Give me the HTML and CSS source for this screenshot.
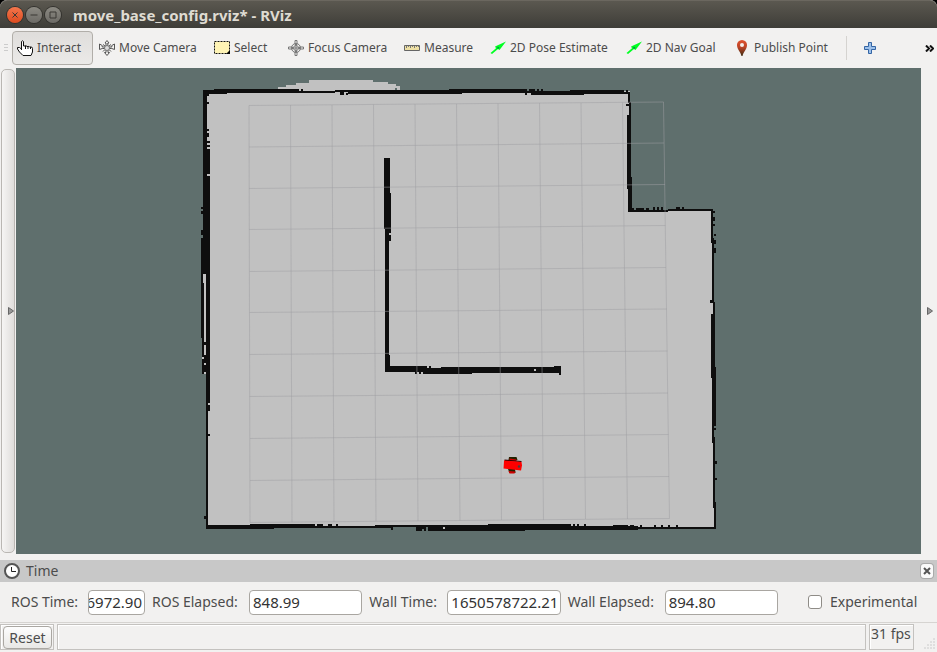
FILE: index.html
```html
<!DOCTYPE html>
<html lang="en">
<head>
<meta charset="utf-8">
<title>move_base_config.rviz* - RViz</title>
<link rel="stylesheet" href="styles.css">
</head>
<body>
<div class="window">
  <header class="titlebar">
    <button class="wm wm-close" aria-label="Close"><svg viewBox="0 0 16 16"><path d="M5.5 5.5l5 5M10.5 5.5l-5 5"/></svg></button>
    <button class="wm" aria-label="Minimize"><svg viewBox="0 0 16 16"><path d="M4.5 8h7"/></svg></button>
    <button class="wm" aria-label="Maximize"><svg viewBox="0 0 16 16"><path d="M5 5h6v6H5z"/></svg></button>
    <h1>move_base_config.rviz* - RViz</h1>
  </header>

  <nav class="toolbar">
    <span class="grip"></span>
    <button class="tool active">
      <svg viewBox="0 0 16 16"><path d="M4.500 10V1.500Q5.500 0 6.500 1.500V6h1.500q1-1 2 .500h1q1-.5 1.500.500h1.500q1.500 0 1.500 1.500V12l-1.500 3.500H6L2.500 12 .5 9V7.500h2L4.500 9" fill="#fff" stroke="#111"/><path d="M8.500 6v3M11 6.500V9M13.500 7v2" stroke="#111" fill="none"/></svg>
      Interact</button>
    <button class="tool">
      <svg viewBox="0 0 16 16"><g fill="#f5f4f2" stroke="#555"><path d="M8 .5l2 2.500H8.800v4h4V5.500L15.500 4v5.500L12.800 8.500H9v4h1.500L8 15.500 5.500 12.500H7v-4H3.200L.5 9.500V4l2.700 1.500V7H7V3H6z"/><path d="M4 4.500l2 1.500M12 4.500L10 6M4 11.500L6 9.500M12 11.500L10 9.500"/></g><circle cx="8" cy="8" r="2.500" fill="#ddd" stroke="#777"/></svg>
      Move Camera</button>
    <button class="tool">
      <svg viewBox="0 0 16 16"><path d="M.5 1.500h15v12H.5z" fill="#fff4b5" stroke="#111" stroke-dasharray="2 1"/><path d="M16 10v4h-4z"/></svg>
      Select</button>
    <button class="tool">
      <svg viewBox="0 0 16 16"><g fill="none" stroke="#777"><circle cx="8" cy="8" r="4.500"/><circle cx="8" cy="8" r="2.500"/><path d="M7 .5h2v4H7zM7 11.500h2v4H7zM.5 7h4v2h-4zM11.500 7h4v2h-4zM8 5v6M5 8h6"/></g></svg>
      Focus Camera</button>
    <button class="tool">
      <svg viewBox="0 0 16 16"><path d="M.5 5.500h15v5H.5z" fill="#eee0a4" stroke="#666"/><path d="M2.500 6v2M4.500 6v1M6.500 6v2M8.500 6v1M10.500 6v2M12.500 6v1M14.500 6v1" stroke="#777"/></svg>
      Measure</button>
    <button class="tool">
      <svg viewBox="0 0 16 16"><path d="M.5 13L6 8.200 5 6.500 16 1.500 9.500 10 8 9 2 14z" fill="#0f2"/><path d="M7.500 6.500l2 1.500-2 1z" fill="#075"/></svg>
      2D Pose Estimate</button>
    <button class="tool">
      <svg viewBox="0 0 16 16"><path d="M.5 13L6 8.200 5 6.500 16 1.500 9.500 10 8 9 2 14z" fill="#0f2"/><path d="M7.500 6.500l2 1.500-2 1z" fill="#075"/></svg>
      2D Nav Goal</button>
    <button class="tool pin">
      <svg viewBox="0 0 12 16"><defs><linearGradient id="pin" x2="0" y2="1"><stop offset="0" stop-color="#e0512e"/><stop offset=".45" stop-color="#bc4427"/><stop offset="1" stop-color="#3c2a10"/></linearGradient></defs><path d="M6 0a5 5 0 0 1 5 5.300C11 9 7.500 12 6.500 16h-1C4.500 12 1 9 1 5.300A5 5 0 0 1 6 0z" fill="url(#pin)"/><circle cx="6" cy="5" r="2" fill="#f4eeea"/></svg>
      Publish Point</button>
    <button class="add" aria-label="Add tool"><svg viewBox="0 0 12 12"><path d="M4.500.5h3v4h4v3h-4v4h-3v-4h-4v-3h4z" fill="#9cc0ea" stroke="#3465a4"/></svg></button>
    <button class="more" aria-label="More tools"><svg viewBox="0 0 9 7"><path d="M1 .5l3 3-3 3M5 .5l3 3-3 3"/></svg></button>
  </nav>

  <main class="workspace">
    <button class="handle" aria-label="Show left panels"><svg viewBox="0 0 6 8"><path d="M.5.5v7l5-3.500z"/></svg></button>
    <svg class="map" viewBox="16 68 905 486" role="img" aria-label="Map view">
      <g shape-rendering="crispEdges">
        <path fill="#c1c1c1" d="M204 91H278V87h8V85h10V83h13V80h64v2h15v2h8v2h4v5H630V211H713V302h1V527H207V374H203V274h3z"/>
        <path fill="#0e0e0e" d="M203 90h24v4h-24zM214 89h85v4h-85zM301 89h2v2h-2zM299 91h36v2h-36zM335 90h127v4H348v-2h-13zM340 92h4v3h-4zM346 93h2v2h-2zM449 89h78v4h-78zM529 89h6v2h-6zM537 89h2v2h-2zM541 89h2v2h-2zM527 91h16v2h-16zM525 93h2v2h-2zM531 91h53v4h-53zM570 90h54v4h-54zM624 92h6v2h-6zM626 90h2v2h-2z"/>
        <path fill="#0e0e0e" d="M628 92h2v11h-2zM629 102h2v13h-2zM626 104h3v2h-3zM627 115h4v74h-4zM628 177h4v35h-4zM628 210h40v2h-40zM632 208h2v2h-2zM636 208h8v2h-8zM646 208h3v2h-3zM653 207h2v3h-2zM657 207h2v3h-2zM661 207h2v3h-2zM668 209h45v2h-45zM676 207h4v2h-4zM682 207h2v2h-2z"/>
        <path fill="#0e0e0e" d="M711 209h2v34h-2zM713 211h2v2h-2zM713 217h2v4h-2zM713 224h2v2h-2zM714 234h2v2h-2zM713 240h3v4h-3zM714 248h2v5h-2zM712 238h2v64h-2zM710 300h3v3h-3zM713 302h2v12h-2zM711 314h4v64h-4zM712 367h4v59h-4zM714 428h2v2h-2zM712 426h2v17h-2zM713 437h2v71h-2zM715 461h2v3h-2zM715 478h2v2h-2zM714 502h2v27h-2z"/>
        <path fill="#0e0e0e" d="M206 525h68v4h-68zM250 524h65v4h-65zM315 526h76v2h-76zM317 524h6v2h-6zM328 524h4v2h-4zM336 524h2v2h-2zM375 525h150v2H375zM391 527h2v3h-2zM416 527h6v4h-6zM422 527h2v2h-2zM424 527h2v4h-2zM428 526h97v5h-97zM488 524h83v6h-83zM571 526h67v4h-67zM573 524h2v2h-2zM577 524h2v2h-2zM584 524h2v2h-2zM613 525h15v2h-15zM630 525h4v2h-4zM628 527h88v2h-88zM640 525h2v2h-2zM654 525h2v2h-2zM661 525h2v2h-2zM668 525h2v2h-2zM676 525h2v2h-2z"/>
        <path fill="#0e0e0e" d="M203 90h4v60h-4zM207 94h2v2h-2zM207 102h2v2h-2zM207 129h2v2h-2zM207 133h2v4h-2zM207 141h3v2h-3zM207 145h3v2h-3zM203 149h7v91h-7zM201 207h2v2h-2zM201 211h2v3h-2zM201 230h2v6h-2zM201 238h9v36h-9zM201 274h2v64h-2zM203 283h1v91h-1zM202 338h4v36h-4zM206 274h4v129h-4zM206 403h2v125h-2zM208 405h2v6h-2zM208 434h2v2h-2zM204 516h2v3h-2z"/>
        <path fill="#0e0e0e" d="M384 158h6v71h-6zM389 193h2v40h-2zM385 229h4v143h-4zM389 235h2v6h-2zM389 355h1v12h-1zM385 366h42v6h-42zM429 366h2v2h-2zM423 368h49v6h-49zM415 372h2v2h-2zM419 372h2v2h-2zM441 367h113v6H441zM554 366h7v7h-7zM559 373h2v2h-2z"/>
        <path fill="#c1c1c1" d="M207 174h3v2h-3zM203 274h3v9h-3zM204 283h2v59h-2zM204 345h2v10h-2zM202 357h2v2h-2zM204 363h2v2h-2zM204 372h2v2h-2zM711 308h2v5h-2zM627 108h2v7h-2zM443 527h2v2h-2zM534 369h2v2h-2z"/>
        <path fill="#5f6f6d" d="M203 374h3v142h-3zM395 88h2v2h-2zM201 235h2v2h-2z"/>
      </g>
      <path class="grid" d="M249 105.500L250 522.500M290.500 105L292 522M332 105L334 522M373.500 104.500L376 521M415 104L418 521M456.500 104L460 520.500M498 103.500L501.500 520M539.500 103L543.500 520M581 103L585.500 519M622.500 102.500L627.500 519M663.500 102L669.500 518.500M249 105.500L663.500 102M249 147L664 143M249 188.500L665 184.500M249 229.500L665.500 225.500M249.500 271.500L666 267.500M249.500 312.500L667 309M249.500 354.500L667.500 351M249.500 396.500L668 393M250 438.500L668.500 434.500M250 480.500L669 476.500M250 522.500L669.500 518.500"/>
      <g class="robot">
        <path d="M509 457h7.500l1 3h-9zM508 469h7l.5 4h-6z" fill="#220"/>
        <path d="M509.500 458.500l7 1v2h-7zM508.500 471l7 .500-1 2h-5z" fill="#c00"/>
        <path d="M504.500 459.500l17 1.500v1l-17-1z" fill="#300"/>
        <path d="M504 460.500l17.500 1.500.5 3.500-1 5-17.500-2z" fill="#f00"/>
        <circle cx="519" cy="466.500" r="1.200" fill="#444"/>
      </g>
    </svg>
    <button class="handle right" aria-label="Show right panels"><svg viewBox="0 0 6 8"><path d="M.5.5v7l5-3.500z"/></svg></button>
  </main>

  <section class="time">
    <header class="panel-title">
      <svg class="clock" viewBox="0 0 16 16"><circle cx="8" cy="8" r="7" fill="#fff" stroke="#555" stroke-width="2"/><path d="M7.500 4v4.500H12" fill="none" stroke="#222"/></svg>
      <h2>Time</h2>
      <button class="panel-close" aria-label="Close panel"><svg viewBox="0 0 8 8"><path d="M1 1l6 6M7 1L1 7"/></svg></button>
    </header>
    <form class="fields">
      <label for="ros-time">ROS Time:</label>
      <input class="clipped" id="ros-time" type="text" value="6972.90">
      <label for="ros-elapsed">ROS Elapsed:</label>
      <input id="ros-elapsed" type="text" value="848.99">
      <label for="wall-time">Wall Time:</label>
      <input id="wall-time" type="text" value="1650578722.21">
      <label for="wall-elapsed">Wall Elapsed:</label>
      <input id="wall-elapsed" type="text" value="894.80">
      <label class="check"><input type="checkbox">Experimental</label>
    </form>
  </section>

  <footer class="status">
    <div class="cell"><button class="reset">Reset</button></div>
    <div class="cell message"></div>
    <div class="cell fps">31 fps</div>
    <svg class="size-grip" viewBox="0 0 12 12"><path d="M9 1h2M6 4h2M9 4h2M3 7h2M6 7h2M9 7h2M0 10h2M3 10h2M6 10h2M9 10h2"/></svg>
  </footer>
</div>
</body>
</html>
```
FILE: styles.css
```css
* { box-sizing: border-box; }

body {
  margin: 0;
  background: #000;
  color: #4c4c4c;
  font: 14px/20px "Noto Sans", "Open Sans", sans-serif;
}

button, input { font: inherit; color: inherit; margin: 0; }
button { padding: 0; border: 0; background: none; }
h1, h2 { margin: 0; font-size: inherit; }
svg { display: block; flex: none; }

.window {
  display: flex;
  flex-direction: column;
  min-height: 100vh;
  background: #f2f1f0;
  border-radius: 7px 7px 0 0;
}

.titlebar {
  display: flex;
  align-items: center;
  gap: 3px;
  height: 28px;
  padding-left: 7px;
  background: linear-gradient(#5b5850, #3e3d38);
  border-top: 1px solid #6b675f;
  border-radius: 7px 7px 0 0;
}
.titlebar h1 {
  margin-left: 9px;
  color: #dfdbd2;
  font-size: 15px;
  font-weight: 700;
}
.wm {
  width: 16px;
  height: 16px;
  border-radius: 50%;
  background: linear-gradient(#8b8982, #6d6b66);
  box-shadow: 0 0 0 1px #33322e;
}
.wm-close { background: linear-gradient(#f4764c, #dd4b1f); }
.wm path { fill: none; stroke: #3a3935; }

.toolbar {
  display: grid;
  grid-template-columns: 12px 81px 115px 74px 116px 86px 136px 110px 116px 1fr 15px;
  align-items: center;
  height: 40px;
  font-size: 12px;
}
.grip {
  width: 4px;
  height: 8px;
  margin-left: 4px;
  background: repeating-linear-gradient(#ccc 0 1px, #f2f1f0 1px 3px);
}
.tool {
  display: flex;
  align-items: center;
  gap: 4px;
  height: 34px;
  padding-left: 6px;
  border: 0;
  white-space: nowrap;
}
.tool svg { width: 16px; height: 16px; }
.tool.active {
  padding-left: 4px;
  border: 1px solid #b1aea9;
  border-radius: 4px;
  background: linear-gradient(#dfdddb, #ebeae8);
}
.tool.pin { gap: 6px; }
.tool.pin svg { width: 12px; }
.add {
  display: flex;
  align-items: center;
  height: 24px;
  padding-left: 17px;
  border-left: 1px solid #d5d3d0;
}
.add svg { width: 12px; height: 12px; }
.more { justify-self: center; }
.more svg { width: 9px; height: 7px; }
.more path { fill: none; stroke: #111; stroke-width: 2; }

.workspace {
  flex: 1;
  display: grid;
  grid-template-columns: 16px 1fr 16px;
}
.handle {
  display: flex;
  align-items: center;
  justify-content: flex-end;
  margin: 1px;
  border: 1px solid #bab7b3;
  border-radius: 5px;
  background: linear-gradient(90deg, #f6f5f4, #dfdddb);
}
.handle.right {
  padding-right: 2px;
  border-color: transparent;
  background: none;
}
.handle svg { width: 6px; height: 8px; }
.handle path { fill: #999; stroke: #666; }
.map { width: 100%; height: 100%; background: #5f6f6d; }
.grid { fill: none; stroke: #a0a0a4; stroke-opacity: .5; }

.time { margin-top: 6px; }
.panel-title {
  display: flex;
  align-items: center;
  gap: 6px;
  height: 22px;
  padding: 0 4px;
  background: #c8c8c8;
}
.panel-title h2 { flex: 1; font-weight: 400; }
.clock { width: 16px; height: 16px; }
.panel-close {
  display: grid;
  place-items: center;
  width: 12px;
  height: 14px;
  border-radius: 3px;
  background: #fafafa;
  box-shadow: 0 0 0 1px #aaa;
}
.panel-close svg { width: 8px; height: 8px; }
.panel-close path { stroke: #555; stroke-width: 2; }

.fields {
  display: grid;
  grid-template-columns: 70px 57px 90px 1fr 71px 1fr 90px 1fr 136px;
  gap: 7px;
  align-items: center;
  height: 40px;
  margin: 0;
  padding: 0 16px 0 11px;
  white-space: nowrap;
}
.fields input[type="text"] {
  width: 100%;
  min-width: 0;
  height: 25px;
  padding: 0 2px 0 3px;
  border: 1px solid #a9a6a1;
  border-radius: 4px;
  background: #fff;
  color: #333;
  font-size: 15px;
}
/* Right-to-left flow keeps the last digits in view when the value is too long. */
.fields input.clipped { padding: 0 2px 0 0; direction: rtl; }
.check {
  display: flex;
  align-items: center;
  gap: 8px;
  padding-left: 23px;
}
.check input {
  appearance: none;
  width: 14px;
  height: 14px;
  border: 1px solid #8f8c87;
  border-radius: 3px;
  background: #fff;
}

.status {
  display: flex;
  gap: 3px;
  height: 30px;
  padding: 1px 1px 2px 0;
  border-top: 1px solid #d6d4d1;
}
.cell { border: 1px solid #c4c2bf; box-shadow: inset 1px 1px #fff; }
.cell:first-child { padding: 1px 1px 0 2px; }
.message { flex: 1; }
.fps { width: 45px; padding: 0 1px; line-height: 18px; }
.reset {
  width: 49px;
  height: 23px;
  border: 1px solid #aaa7a2;
  border-radius: 4px;
  background: linear-gradient(#fdfdfd, #e9e8e6);
  line-height: 20px;
}
.size-grip { width: 12px; height: 12px; align-self: flex-end; margin-left: 7px; }
.size-grip path { stroke: #ccc; }
```
